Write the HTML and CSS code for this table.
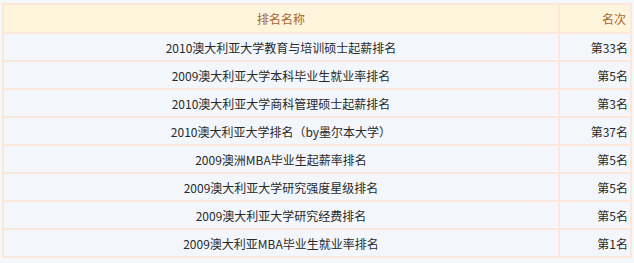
FILE: index.html
```html
<!DOCTYPE html>
<html lang="zh">
<head>
<meta charset="utf-8">
<link rel="stylesheet" href="styles.css">
</head>
<body>
<div class="wrap">
<table class="rank">
<colgroup><col class="c-name"><col class="c-pos"></colgroup>
<thead>
<tr><th class="name">排名名称</th><th class="pos">名次</th></tr>
</thead>
<tbody>
<tr><td class="name">2010澳大利亚大学教育与培训硕士起薪排名</td><td class="pos">第33名</td></tr>
<tr><td class="name">2009澳大利亚大学本科毕业生就业率排名</td><td class="pos">第5名</td></tr>
<tr><td class="name">2010澳大利亚大学商科管理硕士起薪排名</td><td class="pos">第3名</td></tr>
<tr><td class="name">2010澳大利亚大学排名（by墨尔本大学）</td><td class="pos">第37名</td></tr>
<tr><td class="name">2009澳洲MBA毕业生起薪率排名</td><td class="pos">第5名</td></tr>
<tr><td class="name">2009澳大利亚大学研究强度星级排名</td><td class="pos">第5名</td></tr>
<tr><td class="name">2009澳大利亚大学研究经费排名</td><td class="pos">第5名</td></tr>
<tr><td class="name">2009澳大利亚MBA毕业生就业率排名</td><td class="pos">第1名</td></tr>
</tbody>
</table>
</div>
</body>
</html>
```
FILE: styles.css
```css
html, body {
  margin: 0;
  padding: 0;
  background: #f4f8fb;
}
.wrap {
  padding: 3px 2px 0 2px;
}
.rank {
  width: 630px;
  table-layout: fixed;
  border-collapse: separate;
  border-spacing: 2px;
  background: #fde6da;
  font-family: "Noto Sans CJK SC", "Liberation Sans", sans-serif;
  font-size: 12px;
  color: #2a2a2a;
}
.c-name {
  width: 554px;
}
.c-pos {
  width: 70px;
}
.rank th {
  background: #fff4dc;
  color: #a8652c;
  font-weight: normal;
  height: 27px;
  padding: 0 4px;
}
.rank td {
  background: #f3f7fc;
  height: 26px;
  padding: 0 2px;
}
.rank th.name, .rank td.name {
  text-align: center;
}
.rank th.pos, .rank td.pos {
  text-align: right;
}
```
